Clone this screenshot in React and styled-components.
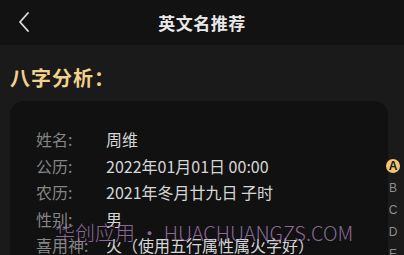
import React from 'react';
import styled, { createGlobalStyle } from 'styled-components';

const GlobalStyle = createGlobalStyle`
  body {
    margin: 0;
    background: #1a1a1a;
    font-family: "Noto Sans CJK SC", "Noto Sans", sans-serif;
    overflow: hidden;
  }
`;

const Page = styled.div`
  position: relative;
  width: 404px;
  height: 255px;
  background: #1a1a1a;
  overflow: hidden;
`;

const Header = styled.div`
  position: relative;
  height: 45px;
  background: #121212;
  display: flex;
  align-items: center;
  justify-content: center;
`;

const BackBtn = styled.div`
  position: absolute;
  left: 14px;
  top: 11px;
  width: 20px;
  height: 22px;
  display: flex;
  align-items: center;
  justify-content: center;
`;

const Title = styled.h1`
  margin: 0;
  font-size: 17px;
  font-weight: 700;
  color: #e8e8e8;
  letter-spacing: 0.5px;
`;

const Content = styled.div`
  padding: 19px 16px 0 10px;
`;

const SectionTitle = styled.h2`
  margin: 0;
  font-size: 20px;
  line-height: 28px;
  font-weight: 700;
  color: #f3d08c;
  letter-spacing: 1px;
`;

const Card = styled.div`
  margin-top: 9px;
  width: 378px;
  background: #111111;
  border-radius: 14px;
  padding: 25px 0 20px 26px;
  box-sizing: border-box;
`;

const Row = styled.div`
  display: flex;
  height: 26.5px;
  align-items: center;
  font-size: 16px;
  white-space: nowrap;
`;

const Label = styled.span`
  width: 70px;
  color: #858585;
`;

const Value = styled.span`
  color: #d6d6d6;
`;

const IndexBar = styled.div`
  position: absolute;
  right: 4px;
  top: 159px;
  display: flex;
  flex-direction: column;
  align-items: center;
  gap: 8px;
`;

const IndexItem = styled.div`
  width: 14px;
  height: 14px;
  border-radius: 50%;
  display: flex;
  align-items: center;
  justify-content: center;
  font-family: "Liberation Sans", Arial, sans-serif;
  font-size: 12px;
  color: ${p => (p.$active ? '#1a1a1a' : '#8f8f8f')};
  background: ${p => (p.$active ? '#f3c670' : 'transparent')};
  font-weight: ${p => (p.$active ? 700 : 400)};
`;

const Watermark = styled.div`
  position: absolute;
  left: 55px;
  top: 218px;
  font-family: "Noto Sans CJK SC", "Noto Sans", sans-serif;
  font-size: 20px;
  font-weight: 300;
  line-height: 29px;
  color: rgba(180, 135, 195, 0.75);
  white-space: nowrap;
  pointer-events: none;
`;

const rows = [
  ['姓名:', '周维'],
  ['公历:', '2022年01月01日 00:00'],
  ['农历:', '2021年冬月廿九日 子时'],
  ['性别:', '男'],
  ['喜用神:', '火（使用五行属性属火字好）'],
];

export default function App() {
  return (
    <Page>
      <GlobalStyle />
      <Header>
        <BackBtn>
          <svg width="12" height="20" viewBox="0 0 12 20">
            <path d="M10 1 L2 10 L10 19" fill="none" stroke="#e0e0e0" strokeWidth="1.8" strokeLinecap="round" strokeLinejoin="round" />
          </svg>
        </BackBtn>
        <Title>英文名推荐</Title>
      </Header>
      <Content>
        <SectionTitle>八字分析：</SectionTitle>
        <Card>
          {rows.map(([l, v]) => (
            <Row key={l}>
              <Label>{l}</Label>
              <Value>{v}</Value>
            </Row>
          ))}
        </Card>
      </Content>
      <IndexBar>
        {['A', 'B', 'C', 'D', 'E'].map((c, i) => (
          <IndexItem key={c} $active={i === 0}>{c}</IndexItem>
        ))}
      </IndexBar>
      <Watermark>华创应用 • HUACHUANGZS.COM</Watermark>
    </Page>
  );
}
